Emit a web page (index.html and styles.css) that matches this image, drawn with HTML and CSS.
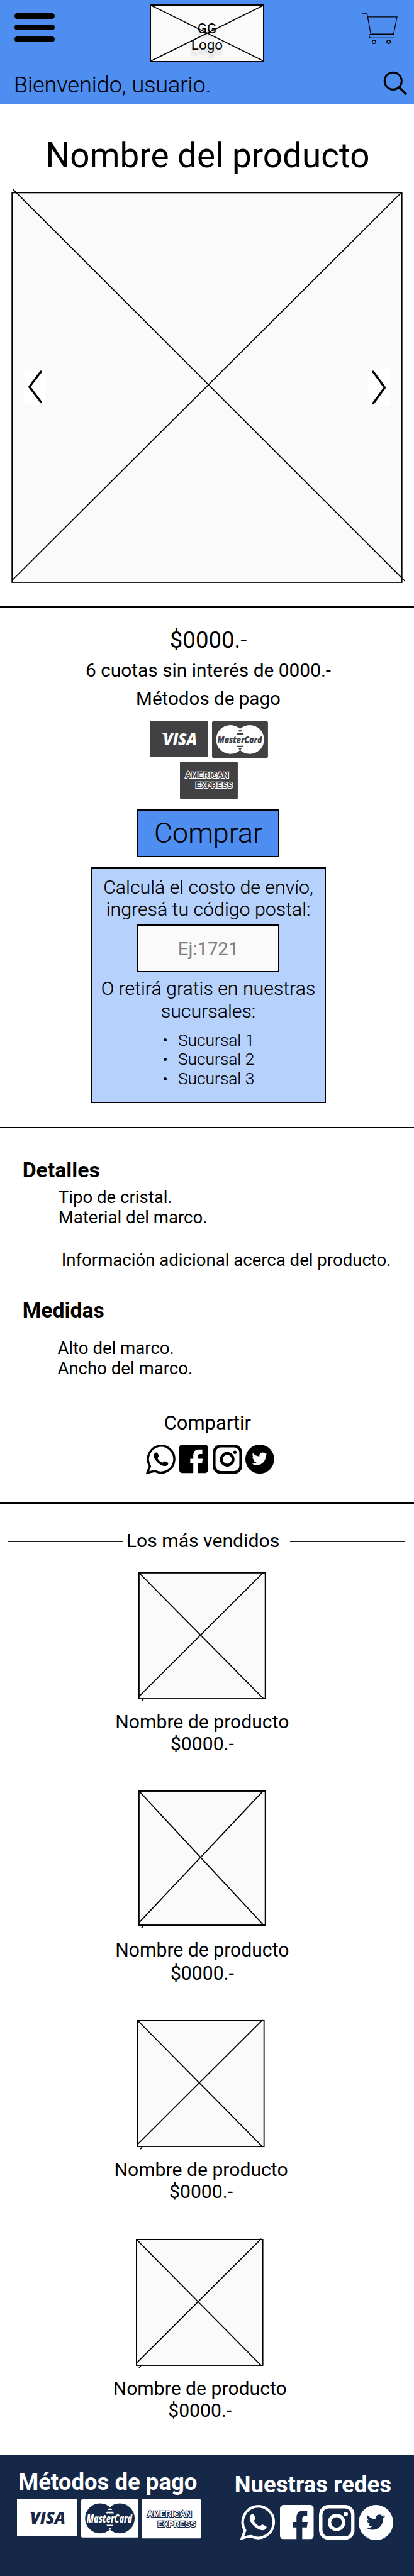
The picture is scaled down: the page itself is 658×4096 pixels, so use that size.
FILE: index.html
```html
<!DOCTYPE html>
<html lang="es">
<head>
<meta charset="utf-8">
<title>Nombre del producto</title>
<link rel="stylesheet" href="styles.css">
</head>
<body>
<svg class="sprite" aria-hidden="true">
  <symbol id="whatsapp" viewBox="0 0 51.4 51.7" preserveAspectRatio="none">
    <path class="line" stroke-width="3.8" d="M2.4 49.3 6.9 37.6A22.9 23.3 0 1 1 16.2 46.2Q12 46 2.4 49.3Z"/>
    <path class="ink" d="M16.5 14C18 13.2 19.8 13.8 20.4 15l1.9 4.5c.3 1.5-1.8 3-2.3 4 1.5 3.5 4.5 6.5 8.8 8 1.2-.7 2.7-2.9 4.2-2.500l5 2.500c1.300.7.6 2.500 0 3.500-2 2.500-5.500 2.800-9 1.600-7-2.600-12.500-8.100-14.800-14.100-1-3.500-.2-7 2.300-8.500z"/>
  </symbol>
  <symbol id="facebook" viewBox="0 0 49.7 49.7" preserveAspectRatio="none">
    <path class="ink" d="M5 0H44.700a5 5 0 0 1 5 5V44.700a5 5 0 0 1-5 5H32.700V32.600H39.500L40.700 24.500H32.700V19.500Q32.700 16.400 35.800 16.400H40V8.500H34.500Q24.300 8.500 24.300 18.500V24.500H19V32.600H24.300V49.700H5a5 5 0 0 1-5-5V5a5 5 0 0 1 5-5Z"/>
  </symbol>
  <symbol id="instagram" viewBox="0 0 51.4 51" preserveAspectRatio="none">
    <rect class="line" stroke-width="5" x="2.5" y="2.5" width="46.4" height="46" rx="11.5"/>
    <circle class="line" stroke-width="5" cx="25.3" cy="25.6" r="10.2"/>
    <circle class="ink" cx="38.7" cy="13.3" r="3"/>
  </symbol>
  <symbol id="twitter" viewBox="0 0 50 50.7" preserveAspectRatio="none">
    <ellipse class="ink" cx="25" cy="25.35" rx="25" ry="25.35"/>
    <path class="paper" transform="translate(11.3 11.3) scale(1.125)" d="M23.953 4.570a10 10 0 01-2.825.775 4.958 4.958 0 002.163-2.723c-.951.555-2.005.959-3.127 1.184a4.920 4.920 0 00-8.384 4.482C7.690 8.095 4.067 6.130 1.640 3.162a4.822 4.822 0 00-.666 2.475c0 1.710.870 3.213 2.188 4.096a4.904 4.904 0 01-2.228-.616v.060a4.923 4.923 0 003.946 4.827 4.996 4.996 0 01-2.212.085 4.936 4.936 0 004.604 3.417 9.867 9.867 0 01-6.102 2.105c-.390 0-.779-.023-1.170-.067a13.995 13.995 0 007.557 2.209c9.053 0 13.998-7.496 13.998-13.985 0-.210 0-.420-.015-.630A9.935 9.935 0 0024 4.590z"/>
  </symbol>
  <symbol id="placeholder" viewBox="0 0 222 221" preserveAspectRatio="none" overflow="visible">
    <rect class="frame" x="1" y="1" width="220" height="219"/>
    <path class="cross" d="M1.5 1.5 218 220M1 216 218.5-.5M5.5 224.5 8.5 221"/>
  </symbol>
</svg>

<header class="header">
  <div class="topbar">
    <div class="menu"><span></span><span></span><span></span></div>
    <div class="logo">
      <svg class="logo-cross" viewBox="0 0 200 100"><path class="cross" d="M1 1 199 99M1 99 199 1"/></svg>
      <span>GG</span><span>Logo</span>
    </div>
    <svg class="cart" viewBox="0 0 64 57"><g fill="none" stroke="#000" stroke-width="1.4"><path d="M0 1.200H9L15.800 37.500M10.300 7.500H61.300L55.300 37.500H16C11.300 38.500 11.300 44 16 44.200H56"/><circle cx="21.200" cy="51" r="3.1"/><circle cx="46.700" cy="51" r="3.1"/></g></svg>
  </div>
  <div class="userbar">
    <span class="welcome">Bienvenido, usuario.</span>
    <svg class="search" viewBox="0 0 43 43"><g fill="none" stroke="#000"><circle cx="17.300" cy="17.300" r="14.8" stroke-width="3.4"/><path d="M28 28.500 40.300 40.500" stroke-width="4"/></g></svg>
  </div>
</header>

<main>
  <section class="gallery">
    <h1 class="title">Nombre del producto</h1>
    <svg class="hero" viewBox="0 328 720 692">
      <rect class="frame" x="21" y="335" width="678" height="678"/>
      <path class="cross" d="M23 329.500 704.500 1011M21 1009.500 699 334"/>
      <path fill="#fff" d="M42 642h38v62H42zM640 642h38v64H640z"/>
      <path class="chevron" d="M71.200 646.500 51.200 672.700 71.200 699.300M649 646.500 669.200 674 649 701.700"/>
    </svg>
  </section>

  <section class="purchase">
    <p class="price">$0000.-</p>
    <p class="fees">6 cuotas sin interés de 0000.-</p>
    <p class="methods">Métodos de pago</p>
    <div class="cards">
      <svg class="card-visa" viewBox="0 0 100 61.4" preserveAspectRatio="none">
        <rect class="ink" width="100" height="61.4"/>
        <text class="paper brand" x="22" y="41.3" font-size="28.5" textLength="59" lengthAdjust="spacingAndGlyphs">VISA</text>
        <path class="paper" d="M20 20.900h8l2 6z"/>
      </svg>
      <svg class="card-master" viewBox="0 0 97.3 63.4" preserveAspectRatio="none">
        <rect class="ink" width="97.3" height="63.4" rx="2"/>
        <circle class="paper" cx="32" cy="31.7" r="25"/>
        <circle class="paper" cx="65.6" cy="31.7" r="25"/>
        <path class="ink" d="M47 15.400h3.800l1.800 2.400h-7.400zM44 20.700h9.800l1.800 2.800H42.200zM43 42.300h11.600l-1.400 2.400h-8.800zM46 47h5.400l-1.400 2h-2.600z"/>
        <text class="ink brand" x="9.3" y="38.3" font-size="17.5" textLength="77.5" lengthAdjust="spacingAndGlyphs">MasterCard</text>
      </svg>
      <svg class="card-amex" viewBox="0 0 100.6 65.3" preserveAspectRatio="none">
        <rect class="ink" width="100.6" height="65.3" rx="2"/>
        <text class="amex" x="9.3" y="29" font-size="14" textLength="75.5" lengthAdjust="spacingAndGlyphs">AMERICAN</text>
        <text class="amex" x="27" y="45.8" font-size="14" textLength="64.5" lengthAdjust="spacingAndGlyphs">EXPRESS</text>
      </svg>
    </div>
    <button class="buy">Comprar</button>
    <div class="shipping">
      <p class="ship-text ask">Calculá el costo de envío,<br>ingresá tu código postal:</p>
      <div class="postal">Ej:1721</div>
      <p class="ship-text pickup">O retirá gratis en nuestras<br>sucursales:</p>
      <ul class="branches"><li>Sucursal 1</li><li>Sucursal 2</li><li>Sucursal 3</li></ul>
    </div>
  </section>

  <section class="details">
    <h2>Detalles</h2>
    <p class="specs">Tipo de cristal.<br>Material del marco.</p>
    <p class="extra">Información adicional acerca del producto.</p>
    <h2 class="sizes-title">Medidas</h2>
    <p class="sizes">Alto del marco.<br>Ancho del marco.</p>
    <p class="share">Compartir</p>
    <div class="share-icons">
      <svg class="s-wa"><use href="#whatsapp"/></svg>
      <svg class="s-fb"><use href="#facebook"/></svg>
      <svg class="s-ig"><use href="#instagram"/></svg>
      <svg class="s-tw"><use href="#twitter"/></svg>
    </div>
  </section>

  <section class="best">
    <div class="best-head"><i></i><h3>Los más vendidos</h3><i></i></div>
    <article class="product p1"><svg><use href="#placeholder"/></svg><p>Nombre de producto<br>$0000.-</p></article>
    <article class="product p2"><svg><use href="#placeholder"/></svg><p>Nombre de producto<br>$0000.-</p></article>
    <article class="product p3"><svg><use href="#placeholder"/></svg><p>Nombre de producto<br>$0000.-</p></article>
    <article class="product p4"><svg><use href="#placeholder"/></svg><p>Nombre de producto<br>$0000.-</p></article>
  </section>
</main>

<footer class="footer">
  <div class="pay">
    <h4>Métodos de pago</h4>
    <div class="pay-cards">
      <svg class="f-visa" viewBox="0 0 100 61.4" preserveAspectRatio="none">
        <rect class="ink" width="100" height="61.4"/>
        <text class="paper brand" x="22" y="41.3" font-size="28.5" textLength="59" lengthAdjust="spacingAndGlyphs">VISA</text>
        <path class="paper" d="M20 20.900h8l2 6z"/>
      </svg>
      <svg class="f-master" viewBox="0 0 97.3 63.4" preserveAspectRatio="none">
        <rect class="ink" width="97.3" height="63.4" rx="2"/>
        <ellipse class="paper" cx="32" cy="31.7" rx="25.3" ry="25"/>
        <ellipse class="paper" cx="65.6" cy="31.7" rx="25.3" ry="25"/>
        <path class="ink" d="M47 15.400h3.800l1.800 2.400h-7.400zM44 20.700h9.800l1.800 2.800H42.200zM43 42.300h11.600l-1.400 2.400h-8.800zM46 47h5.400l-1.400 2h-2.600z"/>
        <text class="ink brand" x="9.3" y="38.3" font-size="17.5" textLength="77.5" lengthAdjust="spacingAndGlyphs">MasterCard</text>
      </svg>
      <svg class="f-amex" viewBox="0 0 100.6 65.3" preserveAspectRatio="none">
        <rect class="ink" width="100.6" height="65.3" rx="2"/>
        <text class="amex" x="9.3" y="29" font-size="14" textLength="75.5" lengthAdjust="spacingAndGlyphs">AMERICAN</text>
        <text class="amex" x="27" y="45.8" font-size="14" textLength="64.5" lengthAdjust="spacingAndGlyphs">EXPRESS</text>
      </svg>
    </div>
  </div>
  <div class="social">
    <h4>Nuestras redes</h4>
    <div class="social-icons">
      <svg class="f-wa"><use href="#whatsapp"/></svg>
      <svg class="f-fb"><use href="#facebook"/></svg>
      <svg class="f-ig"><use href="#instagram"/></svg>
      <svg class="f-tw"><use href="#twitter"/></svg>
    </div>
  </div>
</footer>
</body>
</html>
```
FILE: styles.css
```css
/* 1rem is ten design units; the design is 720 units wide */
html { font-size: 9.138px; background: #fff; }
* { box-sizing: border-box; margin: 0; padding: 0; }
body { width: 72rem; height: 4096px; overflow: hidden; background: #fff; color: #000; font-family: Roboto, "Liberation Sans", sans-serif; font-size: 3.3rem; --ink: #000; --paper: #fff; }
svg { display: block; overflow: visible; flex: none; }
.sprite { position: absolute; width: 0; height: 0; }
.ink { fill: var(--ink); }
.paper { fill: var(--paper); }
.line { fill: none; stroke: var(--ink); }
.brand { font-family: "Open Sans", sans-serif; font-weight: 800; font-style: italic; }
.amex { font-family: "Liberation Sans", sans-serif; font-weight: 700; fill: var(--ink); stroke: var(--paper); stroke-width: 2.6px; paint-order: stroke; }
.frame { fill: #fafafa; stroke: #000; stroke-width: 2px; }
.cross { fill: none; stroke: #000; stroke-width: 1.9px; }
.chevron { fill: none; stroke: #000; stroke-width: 3.8px; stroke-linecap: round; stroke-linejoin: round; }

.header { width: 658px; height: 18.2rem; background: #4f8ef1; }
.topbar { display: flex; align-items: flex-start; height: 12.4rem; padding-top: .8rem; }
.menu { display: flex; flex-direction: column; gap: 1rem; width: 7rem; margin: 1.5rem 0 0 2.5rem; }
.menu span { height: 1rem; border-radius: .5rem; background: #000; }
.logo { position: relative; display: flex; flex-direction: column; align-items: center; width: 20rem; height: 10rem; margin-left: 16.5rem; padding-top: 2.6rem; border: 2px solid #000; background: #fafafa; font-size: 2.45rem; line-height: 2.8rem; text-shadow: 0 .9rem .5rem rgba(0,0,0,.18); }
.logo-cross { position: absolute; left: -2px; top: -2px; width: 20rem; height: 10rem; }
.cart { width: 6.4rem; height: 5.7rem; margin: 1.4rem 0 0 16.9rem; }
.userbar { display: flex; justify-content: space-between; align-items: flex-start; padding: 0 1.1rem 0 2.4rem; }
.welcome { margin-top: .15rem; font-size: 3.93rem; font-weight: 350; line-height: 4.4rem; -webkit-text-stroke: .2px #000; }
.search { width: 4.3rem; height: 4.3rem; }

.gallery { height: 87.5rem; padding-top: 5.48rem; border-bottom: 2px solid #000; }
.title { padding-left: .2rem; font-size: 6rem; font-weight: 400; line-height: 7rem; text-align: center; }
.hero { width: 72rem; height: 69.2rem; margin-top: 2.12rem; }

.purchase { display: flex; flex-direction: column; align-items: center; height: 90.6rem; padding: 3.41rem 0 0 .45rem; border-bottom: 2px solid #000; text-align: center; }
.price { font-size: 4rem; line-height: 4.6rem; }
.fees { margin-top: .98rem; font-size: 3.27rem; line-height: 4rem; }
.methods { margin-top: .93rem; font-size: 3.24rem; line-height: 4rem; }
.cards { --ink: #414042; display: flex; flex-wrap: wrap; justify-content: center; gap: .63rem .7rem; width: 21rem; margin: 1.89rem 0 0 .3rem; }
.card-visa { width: 10.04rem; height: 6.14rem; }
.card-master { width: 9.73rem; height: 6.34rem; }
.card-amex { width: 10.06rem; height: 6.53rem; }
.buy { width: 24.67rem; height: 8.34rem; margin-top: 1.8rem; border: 2px solid #000; background: #4f8ef1; color: #000; font: 350 4.9rem/7.6rem Roboto, sans-serif; -webkit-text-stroke: .2px #000; }
.shipping { display: flex; flex-direction: column; align-items: center; width: 41rem; height: 41.1rem; margin-top: 1.73rem; padding-top: 1.32rem; border: 2px solid #000; background: #b5d1fc; font-weight: 350; }
.ship-text { font-size: 3.32rem; line-height: 3.86rem; white-space: nowrap; -webkit-text-stroke: .2px #000; }
.postal { width: 24.67rem; height: 8.27rem; margin-top: .79rem; border: 2px solid #000; background: #fafafa; color: #808080; font-size: 3.2rem; font-weight: 400; line-height: 8.1rem; }
.pickup { margin-top: .92rem; }
.branches { width: 16rem; margin: 1.5rem 0 0 .4rem; padding-left: 2.5rem; font-size: 2.88rem; line-height: 3.36rem; text-align: left; list-style: none; white-space: nowrap; -webkit-text-stroke: .2px #000; }
.branches li { display: flex; align-items: center; }
.branches li::before { content: ""; width: .55rem; height: .55rem; margin: 0 2rem 0 -2.5rem; border-radius: 50%; background: #000; }

.details { height: 65.4rem; padding-top: 5.3rem; border-bottom: 2px solid #000; }
.details h2 { padding-left: 3.9rem; font-size: 3.7rem; font-weight: 700; line-height: 4.2rem; }
.specs, .extra, .sizes { font-size: 3.02rem; line-height: 3.5rem; }
.specs { margin-top: .85rem; padding-left: 10.15rem; }
.extra { margin-top: 3.9rem; padding-left: 10.7rem; white-space: nowrap; }
.details .sizes-title { margin-top: 4.99rem; }
.sizes { margin-top: 2.66rem; padding-left: 10rem; }
.share { margin-top: 5.84rem; padding-left: .2rem; font-size: 3.38rem; line-height: 4rem; text-align: center; }
.share-icons { display: flex; align-items: flex-start; margin-top: 1.66rem; padding-left: 25.43rem; }
.s-wa { width: 5.14rem; height: 5.17rem; }
.s-fb { width: 4.97rem; height: 4.97rem; margin: .03rem 0 0 .6rem; }
.s-ig { width: 5.14rem; height: 5.1rem; margin-left: .8rem; }
.s-tw { width: 5rem; height: 5.07rem; margin-left: .6rem; }

.best-head { display: flex; align-items: center; justify-content: space-between; margin-top: 4.48rem; padding: 0 1.6rem 0 1.38rem; }
.best-head i { width: 20rem; height: 2px; background: #1a1a1a; }
.best-head h3 { margin-right: 1.2rem; font-size: 3.3rem; font-weight: 400; line-height: 4rem; }
.product { display: flex; flex-direction: column; width: 30.6rem; margin-left: 19.87rem; }
.product svg { width: 22.17rem; height: 22.1rem; margin-left: 4.2rem; }
.product p { margin-top: 1.96rem; line-height: 3.84rem; text-align: center; white-space: nowrap; }
.p1 { margin-top: 3.42rem; }
.p2 { margin-top: 6.26rem; }
.p2 svg { height: 23.53rem; }
.p2 p { margin-top: 2.02rem; transform: scaleY(1.07); transform-origin: top; }
.p3 { margin: 6.71rem 0 0 19.67rem; }
.p4 { margin: 6.33rem 0 0 19.47rem; }

.footer { --ink: #fff; --paper: #162848; display: flex; width: 658px; height: 22rem; margin-top: 5.82rem; border-top: 1px solid #000; background: #162848; color: #fff; }
.footer h4 { font-size: 4rem; font-weight: 700; line-height: 4.4rem; white-space: nowrap; }
.pay { width: 38rem; padding: 2.45rem 0 0 2.94rem; }
.pay h4 { padding-left: .25rem; }
.pay-cards { display: flex; align-items: flex-start; margin-top: .75rem; }
.f-visa { width: 10.42rem; height: 6.4rem; }
.f-master { width: 9.96rem; height: 6.64rem; margin-left: .74rem; }
.f-amex { width: 10.37rem; height: 6.8rem; margin-left: .6rem; }
.social { padding-top: 2.9rem; }
.social h4 { padding-left: 2.8rem; }
.social-icons { display: flex; align-items: flex-start; margin-top: 1.3rem; padding-left: 3.78rem; }
.f-wa { width: 6.06rem; height: 6.1rem; }
.f-fb { width: 5.88rem; height: 5.97rem; margin-left: .83rem; }
.f-ig { width: 6.2rem; height: 6.07rem; margin-left: .91rem; }
.f-tw { width: 6.02rem; height: 6.13rem; margin-left: .69rem; }
```
